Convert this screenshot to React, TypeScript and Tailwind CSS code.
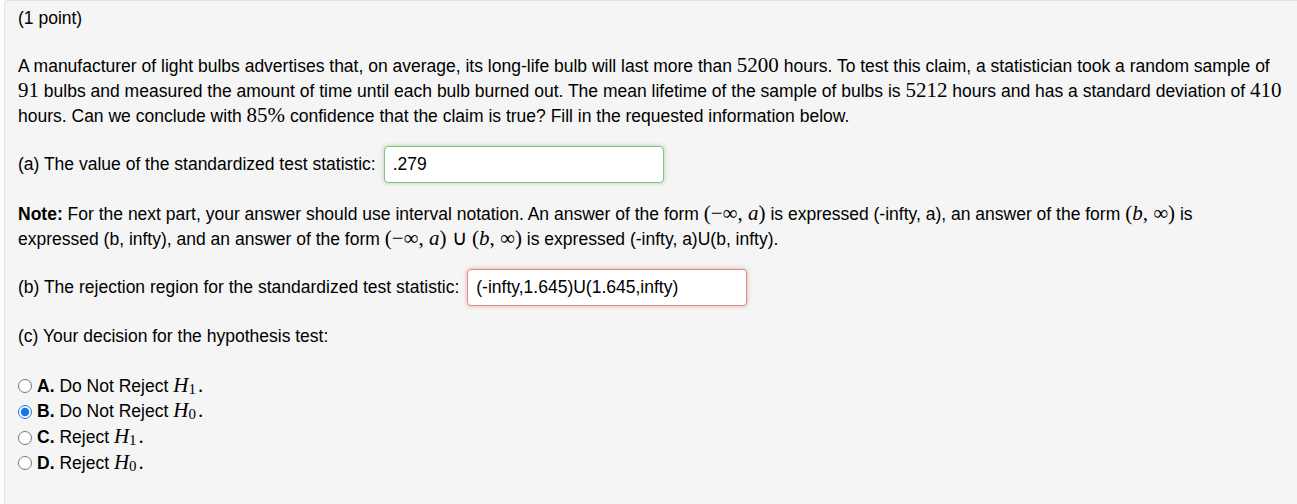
import React from 'react'

// Inline math pieces rendered in a serif face, like MathJax output
const M = ({ children }: { children: React.ReactNode }) => (
  <span className="font-['Liberation_Serif',serif] text-[21px] leading-[20px]">{children}</span>
)

const I = ({ children }: { children: React.ReactNode }) => <i className="font-['Liberation_Serif',serif]">{children}</i>

const H = ({ n }: { n: number }) => (
  <M>
    <I>H</I>
    <sub className="text-[15px] relative top-[2px]">{n}</sub>
    <span className="ml-[2px]">.</span>
  </M>
)

const options = [
  { key: 'A', text: 'Do Not Reject', n: 1, checked: false },
  { key: 'B', text: 'Do Not Reject', n: 0, checked: true },
  { key: 'C', text: 'Reject', n: 1, checked: false },
  { key: 'D', text: 'Reject', n: 0, checked: false },
]

export default function App() {
  return (
    <div className="h-[504px] bg-white font-['Liberation_Sans',Arial,sans-serif] text-[17.5px] text-black pl-[4px] flex">
      {/* problem well: its right and bottom edges run past the frame */}
      <div className="flex-1 bg-[#f5f5f5] border-l border-t border-[#e3e3e3] rounded-tl-[4px] pl-[13px] pt-[5px]">
        <div className="w-[1272px] leading-[25px]">
          <p>(1 point)</p>

          <p className="mt-[22.5px]">
            A manufacturer of light bulbs advertises that, on average, its long-life bulb will last more than <M>5200</M> hours. To test this claim, a statistician took a random sample of <br />
            <M>91</M> bulbs and measured the amount of time until each bulb burned out. The mean lifetime of the sample of bulbs is <M>5212</M> hours and has a standard deviation of <M>410</M>
            <br />
            hours. Can we conclude with <M>85%</M> confidence that the claim is true? Fill in the requested information below.
          </p>

          <div className="mt-[17.5px] flex items-center gap-[8px]">
            <span>(a) The value of the standardized test statistic:</span>
            <input
              type="text"
              defaultValue=".279"
              className="w-[280px] h-[37px] px-[8px] bg-white rounded-[4px] border border-[#7fc47f] shadow-[0_0_4px_rgba(80,170,80,0.45)] outline-none text-[17.5px]"
            />
          </div>

          <p className="mt-[18.5px]">
            <b>Note:</b> For the next part, your answer should use interval notation. An answer of the form{' '}
            <M>(−∞, <I>a</I>)</M> is expressed (-infty, a), an answer of the form <M>(<I>b</I>, ∞)</M> is
            <br />
            expressed (b, infty), and an answer of the form <M>(−∞, <I>a</I>) ∪ (<I>b</I>, ∞)</M> is expressed (-infty, a)U(b, infty).
          </p>

          <div className="mt-[17.5px] flex items-center gap-[8px]">
            <span>(b) The rejection region for the standardized test statistic:</span>
            <input
              type="text"
              defaultValue="(-infty,1.645)U(1.645,infty)"
              className="w-[280px] h-[37px] px-[8px] bg-white rounded-[4px] border border-[#e08a8a] shadow-[0_0_4px_rgba(200,80,80,0.45)] outline-none text-[17.5px]"
            />
          </div>

          <p className="mt-[17.5px]">(c) Your decision for the hypothesis test:</p>

          <div className="mt-[25px]">
            {options.map((o) => (
              <label key={o.key} className="flex items-center h-[25.67px] gap-[5px]">
                <input type="radio" name="decision" defaultChecked={o.checked} className="w-[14px] h-[14px] m-0 accent-[#1a73e8]" />
                <span className="whitespace-nowrap">
                  <b>{o.key}.</b> {o.text} <H n={o.n} />
                </span>
              </label>
            ))}
          </div>
        </div>
      </div>
    </div>
  )
}
